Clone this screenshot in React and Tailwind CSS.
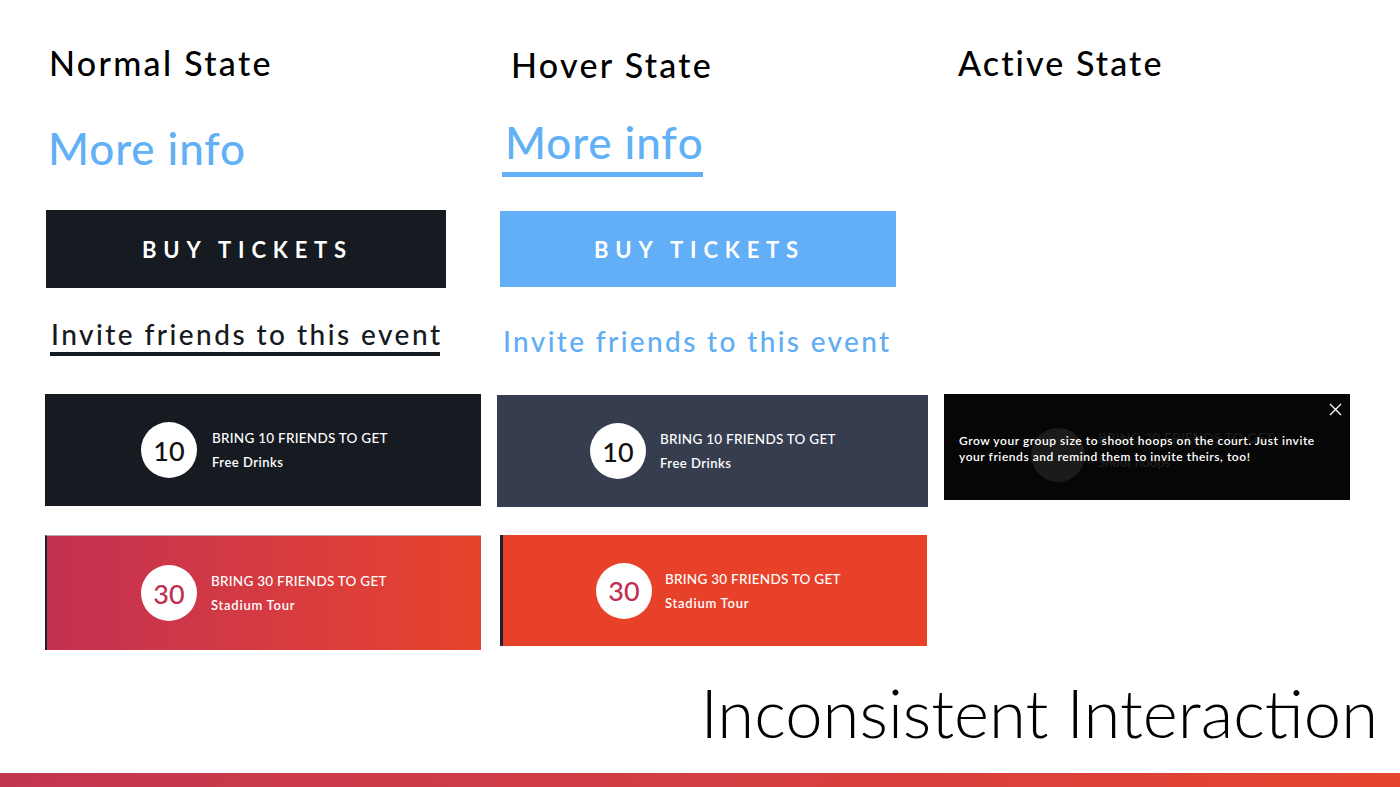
import React from "react";

function Circle({ n, color, className }) {
  return (
    <div
      className={`flex h-[56px] w-[56px] shrink-0 items-center justify-center rounded-full bg-white text-[27px] font-medium leading-none ${className || ""}`}
      style={{ color }}
    >
      {n}
    </div>
  );
}

function RewardCard({ bg, n, numColor, title, sub, subTrack, circleMl, className }) {
  return (
    <div className={`flex items-center ${bg} ${className || ""}`}>
      <Circle n={n} color={numColor} className={circleMl} />
      <div className="flex flex-col text-white">
        <div className="text-[13.5px] font-medium leading-[16px] tracking-[0.25px]">{title}</div>
        <div className={`mt-[8px] text-[13px] font-semibold leading-[16px] ${subTrack}`}>{sub}</div>
      </div>
    </div>
  );
}

export default function App() {
  return (
    <div
      className="relative flex h-[787px] w-[1400px] flex-col overflow-hidden bg-white text-black"
      style={{ fontFamily: "Lato, 'Open Sans', sans-serif" }}
    >
      <div className="flex flex-1 pl-[45px]">
        {/* Column 1 - Normal */}
        <div className="flex w-[436px] flex-col pt-[43px]">
          <h2 className="ml-[4px] text-[34px] font-medium leading-[40px] tracking-[2.3px] text-black">Normal State</h2>
          <div className="ml-[3px] mt-[39px] text-[44px] font-medium leading-[52px] tracking-[0.9px] text-[#62b0f6]">More info</div>
          <div className="ml-[1px] mt-[36px] flex h-[78px] w-[400px] items-center justify-center bg-[#161a21] pl-[3px] text-[22px] font-bold tracking-[6.8px] text-white">
            BUY TICKETS
          </div>
          <div className="ml-[5px] mt-[30px] self-start border-b-4 border-[#161a21] pb-[2px] pl-[1px] text-[28px] font-medium leading-[32px] tracking-[2.45px] text-[#161a21]">
            Invite friends to this even<span className="tracking-normal">t</span>
          </div>
          <RewardCard
            className="mt-[38px] h-[112px] w-[436px]"
            bg="bg-[#161a21]"
            n="10"
            numColor="#111"
            title="BRING 10 FRIENDS TO GET"
            sub="Free Drinks"
            subTrack="tracking-[0.5px]"
            circleMl="ml-[96px] mr-[15px]"
          />
          <RewardCard
            className="mt-[29px] h-[115px] w-[436px] border-l-2 border-t border-l-[#1d2233] border-t-[#b9a9b3] bg-gradient-to-r from-[#c23150] to-[#e8432a]"
            bg=""
            n="30"
            numColor="#c2304f"
            title="BRING 30 FRIENDS TO GET"
            sub="Stadium Tour"
            subTrack="tracking-[0.75px]"
            circleMl="ml-[94px] mr-[14px]"
          />
        </div>

        {/* Column 2 - Hover */}
        <div className="ml-[16px] flex w-[431px] flex-col pt-[45px]">
          <h2 className="ml-[14px] text-[34px] font-medium leading-[40px] tracking-[2.3px] text-black">Hover State</h2>
          <div className="ml-[5px] mt-[31px] self-start border-b-[5px] border-[#62b0f6] pb-[4px] pl-[3px] text-[44px] font-medium leading-[52px] tracking-[0.9px] text-[#62b0f6]">
            More inf<span className="tracking-normal">o</span>
          </div>
          <div className="ml-[3px] mt-[34px] flex h-[76px] w-[396px] items-center justify-center bg-[#62aff7] pl-[3px] text-[22px] font-bold tracking-[6.8px] text-white">
            BUY TICKETS
          </div>
          <div className="ml-[6px] mt-[38px] text-[28px] font-medium leading-[32px] tracking-[2.35px] text-[#5fadf5]">
            Invite friends to this event
          </div>
          <RewardCard
            className="mt-[38px] h-[112px] w-[431px]"
            bg="bg-[#353d4e]"
            n="10"
            numColor="#111"
            title="BRING 10 FRIENDS TO GET"
            sub="Free Drinks"
            subTrack="tracking-[0.5px]"
            circleMl="ml-[93px] mr-[14px]"
          />
          <RewardCard
            className="ml-[3px] mt-[28px] h-[111px] w-[427px] border-l-[3px] border-l-[#1d2233]"
            bg="bg-[#e8412a]"
            n="30"
            numColor="#c2304f"
            title="BRING 30 FRIENDS TO GET"
            sub="Stadium Tour"
            subTrack="tracking-[0.75px]"
            circleMl="ml-[93px] mr-[13px]"
          />
        </div>

        {/* Column 3 - Active */}
        <div className="ml-[16px] flex w-[406px] flex-col pt-[43px]">
          <h2 className="ml-[14px] text-[34px] font-medium leading-[40px] tracking-[2.1px] text-black">Active State</h2>
          <div className="relative mt-[311px] h-[106px] w-[406px] overflow-hidden bg-[#060606]">
            <div className="absolute left-[87px] top-[34px] h-[54px] w-[54px] rounded-full bg-[#1b1b1b]" />
            <div className="absolute left-[154px] top-[36px] text-[13.5px] font-medium leading-[16px] tracking-[0.25px] text-[#1e1e1e]">
              BRING 20 FRIENDS TO GET
            </div>
            <div className="absolute left-[154px] top-[60px] text-[13px] font-semibold leading-[16px] text-[#1e1e1e]">
              Shoot hoops
            </div>
            <svg className="absolute right-[8px] top-[9px]" width="13" height="13" viewBox="0 0 13 13">
              <path d="M1 1 L12 12 M12 1 L1 12" stroke="white" strokeWidth="1.3" fill="none" />
            </svg>
            <div className="relative pl-[15px] pt-[39px] text-[12px] font-semibold leading-[16px] tracking-[0.55px] text-white">
              Grow your group size to shoot hoops on the court. Just invite
              <br />
              your friends and remind them to invite theirs, too!
            </div>
          </div>
        </div>
      </div>

      <div className="flex justify-end pb-[21px] pr-[22px]">
        <div className="text-[67px] font-light leading-[80px] text-black">Inconsistent Interaction</div>
      </div>
      <div className="h-[14px] w-full bg-gradient-to-r from-[#c2364f] to-[#e5442e]" />
    </div>
  );
}
